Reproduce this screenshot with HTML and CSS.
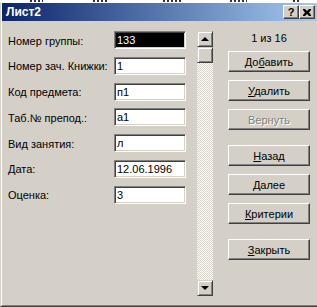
FILE: index.html
```html
<!DOCTYPE html>
<html lang="ru">
<head>
    <meta charset="UTF-8">
    <meta name="viewport" content="width=device-width, initial-scale=1.0">
    <title>Лист2</title>
    <link rel="stylesheet" href="styles.css">
</head>
<body>
    <!-- остатки листа за окном -->
    <div class="sheet-strip">
        <span class="bit w13 ml30"></span>
        <span class="bit w14 ml50"></span>
        <span class="bit w20 ml56"></span>
        <span class="bit w17 ml47"></span>
        <span class="bit w7 ml46"></span>
    </div>

    <div class="window">
        <div class="frame">
            <div class="titlebar">
                <span class="title">Лист2</span>
                <div class="caption-buttons">
                    <span class="cap-btn">?</span>
                    <span class="cap-btn">
                        <svg viewBox="0 0 8 7" width="8" height="7">
                            <path d="M0 0h2l2 2 2-2h2v1l-2 2.5 2 2.5v1h-2l-2-2-2 2h-2v-1l2-2.5-2-2.5z"/>
                        </svg>
                    </span>
                </div>
            </div>

            <div class="dialog">
                <div class="fields">
                    <label>Номер группы:</label>
                    <div class="field selected">133</div>
                    <label>Номер зач. Книжки:</label>
                    <div class="field">1</div>
                    <label>Код предмета:</label>
                    <div class="field">п1</div>
                    <label>Таб.№ препод.:</label>
                    <div class="field">а1</div>
                    <label>Вид занятия:</label>
                    <div class="field">л</div>
                    <label>Дата:</label>
                    <div class="field">12.06.1996</div>
                    <label>Оценка:</label>
                    <div class="field">3</div>
                </div>

                <div class="scrollbar">
                    <div class="sb-btn"><span class="arrow-up"></span></div>
                    <div class="sb-btn"></div>
                    <div class="sb-track"></div>
                    <div class="sb-btn"><span class="arrow-down"></span></div>
                </div>

                <div class="actions">
                    <div class="counter">1 из 16</div>
                    <button class="btn">До<u>б</u>авить</button>
                    <button class="btn"><u>У</u>далить</button>
                    <button class="btn disabled">Вернуть</button>
                    <button class="btn group">
                        <u>Н</u>азад</button>
                    <button class="btn"><u>Д</u>алее</button>
                    <button class="btn"><u>К</u>ритерии</button>
                    <button class="btn group"><u>З</u>акрыть</button>
                </div>
            </div>
        </div>
    </div>
</body>
</html>
```

FILE: styles.css
```css
/* Общие настройки */
body {
    margin: 0;
    background-color: #fff;
    font-family: "Liberation Sans", Tahoma, sans-serif;
    font-size: 11px;
    color: #000;
}

/* Полоска листа над окном */
.sheet-strip {
    height: 3px;
    display: flex;
    align-items: flex-start;
}

.bit {
    height: 2px;
    background: repeating-linear-gradient(90deg, #333 0 2px, #fff 2px 4px);
}

.w7 { width: 7px; }
.w13 { width: 13px; }
.w14 { width: 14px; }
.w17 { width: 17px; }
.w20 { width: 20px; }
.ml30 { margin-left: 30px; }
.ml46 { margin-left: 46px; }
.ml47 { margin-left: 47px; }
.ml50 { margin-left: 50px; }
.ml56 { margin-left: 56px; }

/* Рамка окна */
.window {
    border-left: 1px solid #d4d0c8;
    border-bottom: 1px solid #404040;
}

.frame {
    border-left: 1px solid #fff;
    border-bottom: 1px solid #808080;
    background-color: #d4d0c8;
}

/* Заголовок окна */
.titlebar {
    height: 18px;
    display: flex;
    align-items: center;
    justify-content: space-between;
    padding: 0 2px 0 4px;
    background: linear-gradient(90deg, #0a246a, #a6caf0);
}

.title {
    color: #fff;
    font-weight: bold;
    font-size: 12px;
}

.caption-buttons {
    display: flex;
}

.cap-btn {
    width: 16px;
    height: 14px;
    box-sizing: border-box;
    display: flex;
    align-items: center;
    justify-content: center;
    background-color: #d4d0c8;
    border: 1px solid;
    border-color: #fff #404040 #404040 #fff;
    box-shadow: inset -1px -1px #808080;
    font-weight: bold;
    font-size: 11px;
    line-height: 1;
}

/* Тело диалога */
.dialog {
    height: 284px;
    box-sizing: border-box;
    display: flex;
    align-items: flex-start;
    padding: 10px 0 0 6px;
}

.fields {
    display: grid;
    grid-template-columns: 106px 72px;
    grid-auto-rows: 18px;
    row-gap: 7.8px;
    align-items: center;
}

.fields label {
    padding-top: 1px;
}

.field {
    height: 18px;
    box-sizing: border-box;
    border: 1px solid;
    border-color: #808080 #fff #fff #808080;
    box-shadow: inset 1px 1px #404040, inset -1px -1px #d4d0c8;
    background-color: #fff;
    padding: 0 2px;
    line-height: 16px;
    font-size: 11px;
}

.field.selected {
    background-color: #000;
    color: #fff;
}

/* Полоса прокрутки */
.scrollbar {
    width: 16px;
    height: 265px;
    margin-left: 11px;
    display: flex;
    flex-direction: column;
}

.sb-btn {
    height: 16px;
    box-sizing: border-box;
    display: flex;
    align-items: center;
    justify-content: center;
    background-color: #d4d0c8;
    border: 1px solid;
    border-color: #d4d0c8 #404040 #404040 #d4d0c8;
    box-shadow: inset 1px 1px #fff, inset -1px -1px #808080;
}

.sb-track {
    flex: 1;
    background: repeating-conic-gradient(#fff 0 25%, #d4d0c8 0 50%) 0 0 / 2px 2px;
}

.arrow-up, .arrow-down {
    width: 0;
    height: 0;
    border-left: 4px solid transparent;
    border-right: 4px solid transparent;
}

.arrow-up {
    border-bottom: 4px solid #000;
}

.arrow-down {
    border-top: 4px solid #000;
}

/* Кнопки справа */
.actions {
    width: 82px;
    margin-left: 15px;
    display: flex;
    flex-direction: column;
}

.counter {
    height: 14px;
    line-height: 14px;
    text-align: center;
    margin-bottom: 6px;
}

.btn {
    height: 21px;
    margin-bottom: 8px;
    padding: 0;
    background-color: #d4d0c8;
    border: 1px solid;
    border-color: #fff #404040 #404040 #fff;
    box-shadow: inset -1px -1px #808080;
    font-family: inherit;
    font-size: 11px;
    color: #000;
    text-align: center;
}

.btn.group {
    margin-top: 7px;
}

.btn.disabled {
    color: #808080;
    text-shadow: 1px 1px #fff;
}
```
